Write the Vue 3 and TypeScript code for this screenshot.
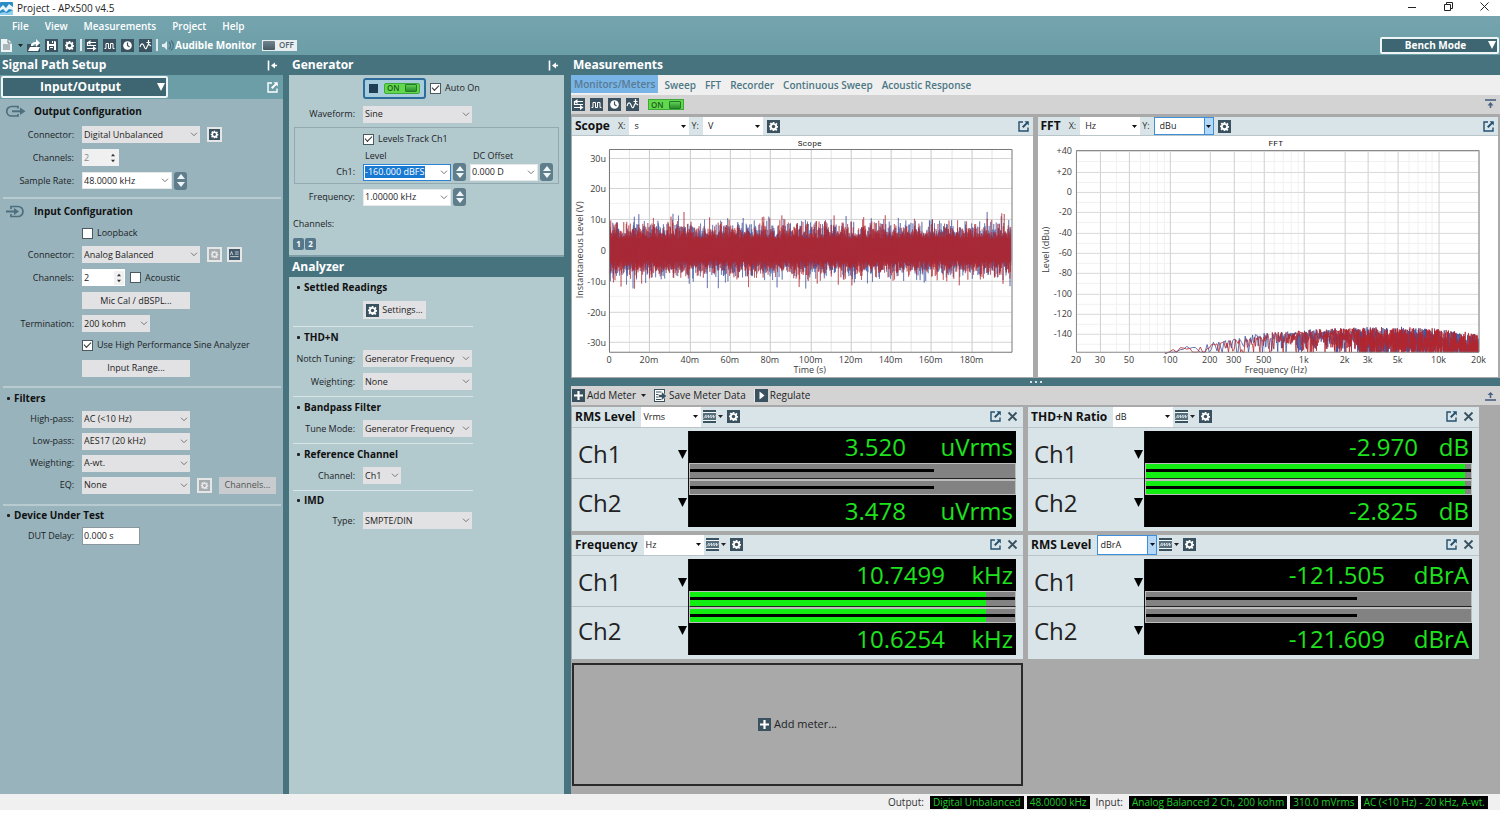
<script setup lang="ts">
import { h } from 'vue'

const INK = '#3a525f'
const box = (inner: string, bg = INK) => `<rect width="13" height="13" fill="${bg}"/>${inner}`
const gearShape = (fg: string, hole: string) =>
  `<path d="M5.6 2h1.8v1.3l1 .4.9-.9 1.3 1.3-.9.9.4 1H11v1.8H9.900l-.4 1 .9.9-1.300 1.300-.9-.9-1 .4V11H5.600V9.900l-1-.4-.9.9-1.300-1.300.9-.9-.4-1H2V5.600h1.100l.4-1-.9-.9 1.300-1.300.9.9 1-.4z" fill="${fg}"/><circle cx="6.500" cy="6.500" r="1.700" fill="${hole}"/>`

const glyphs: Record<string, string> = {
  app: '<rect width="13" height="13" rx="1" fill="#2b8bc4"/><path d="M0 6l3-3 3 3 3-4 4 3v3L9 7 6 10 3 7 0 9z" fill="#e8f6fc"/><path d="M0 11l4-1 3 1 6-3v5H0z" fill="#8fd0ee"/>',
  doc: '<path d="M0 0h7l4 4v9H0z" fill="#eef3f4"/><path d="M7 0v4h4M2 6h7M2 8h7M2 10h7" stroke="#55707b" fill="none" stroke-width=".9"/>',
  open: '<path d="M0 5h4v2h5V5h4v8H0z" fill="#3a525f"/><path d="M1 12l2-4h10l-2 4z" fill="#fff"/><path d="M4 7c0-3 2-4 5-4V0l4 4-4 4V5C7 5 6 6 6 7z" fill="#fff"/>',
  save: box('<path d="M2 2h8l1 1v8H2z" fill="#fff"/><path d="M4 2h5v3H4zM4 7h5v4H4z" fill="#3a525f"/><path d="M7 2h1v2H7zM5 8h3v1H5z" fill="#fff"/>'),
  gear: box(gearShape('#fff', INK)),
  gearOff: box(gearShape('#e6e6e6', '#a4acaf'), '#a4acaf'),
  path: box('<path d="M4 3.500h7M2 9.500h7M2.500 3v3.500H11" stroke="#fff" fill="none" stroke-width="1.200"/><path d="M5.500 1v5L2 3.500zM8 7v5l3.500-2.500z" fill="#fff"/>'),
  wave: box('<path d="M1.500 9.500h1.500v-5h2.500v5h2v-5H10v5h1.500" stroke="#fff" fill="none"/>'),
  clock: box('<circle cx="6.500" cy="6.500" r="4.300" fill="#fff"/><path d="M6.500 3.500v3l2 1.500" stroke="#3a525f" fill="none" stroke-width="1.200"/>'),
  sweep: box('<path d="M1 8c1-4 3-4 4-1s2 4 3 1 2-3 4-1" stroke="#fff" fill="none" stroke-width="1.100"/><path d="M9.500 1v5M7.500 3.500h4" stroke="#fff" stroke-width="1.200"/>'),
  speaker: '<path d="M1 5h2l3-3v9L3 8H1z" fill="#e3eef0"/><path d="M8 3c2 2 2 5 0 7M10 1.500c3 3 3 7 0 10" stroke="#48707c" stroke-width="1.300" fill="none"/>',
  dock: '<path d="M2.500 1.500v10" stroke="#fff" stroke-width="1.600"/><path d="M5 6.500l4-3v6z" fill="#fff"/><path d="M7 6.500h4" stroke="#fff" stroke-width="1.600"/>',
  popout: '<path d="M6 2H2v9h9V7.500" stroke="currentColor" stroke-width="1.400" fill="none"/><path d="M7.500 1.200h4.300v4.300L10.300 4 6.500 8 5 6.500l4-3.800z" fill="currentColor"/>',
  close: '<path d="M2.500 2.500l8 8M10.500 2.500l-8 8" stroke="#3a525f" stroke-width="1.800" fill="none"/>',
  meter: '<rect width="13" height="13" fill="#f3f6f7"/><path d="M0 0h13v2H0zM0 11h13v2H0z" fill="#3a525f"/><path d="M0 3h13v7H0z" fill="#566d7c"/><path d="M.5 8.500L3 5v3l2.500-3v3L8 5v3l2.500-3v3l2-2.500" stroke="#e4ebee" fill="none" stroke-width=".8"/>',
  plus: box('<path d="M6.500 2v9M2 6.500h9" stroke="#fff" stroke-width="2.200"/>'),
  saveData: '<rect x=".5" y=".5" width="10" height="12" fill="#fff" stroke="#3a525f"/><path d="M2 3h6M2 5.500h3M2 8h3M2 10.500h6" stroke="#3a525f"/><path d="M4.500 5.500h3V2.500L12.800 7 7.500 11.500v-3h-3z" fill="#3a525f" stroke="#fff" stroke-width=".6"/>',
  play: box('<path d="M4.500 2.500v8l5-4z" fill="#fff"/>'),
  teds: box('<path d="M1.500 7l1.500-4 1.500 4M7 3.500h4.500M7 6h4.500M1.500 9h10" stroke="#e6ecee" fill="none" stroke-width=".9"/>', '#41586a'),
  up: '<path d="M1 2h11" stroke="#4a6180" stroke-width="1.600"/><path d="M6.500 4l3 3.500h-6z" fill="#4a6180"/><path d="M6.500 6v4" stroke="#4a6180" stroke-width="1.600"/>',
  down: '<path d="M1 11h11" stroke="#4a6180" stroke-width="1.600"/><path d="M6.500 3l3 3h-6z" fill="#4a6180"/><path d="M6.500 5v4" stroke="#4a6180" stroke-width="1.600"/>',
  output: '<path d="M12 3.500V1.500H5.500a4.500 4.500 0 0 0 0 9.500H12V9" stroke="#4d6f7d" stroke-width="1.700" fill="none"/><path d="M6 6.300h9" stroke="#4d6f7d" stroke-width="2"/><path d="M14 2.500l5.500 3.800L14 10z" fill="#4d6f7d"/>',
  input: '<path d="M5 4V1.500h7a5 5 0 0 1 0 10H5V9" stroke="#4d6f7d" stroke-width="1.700" fill="none"/><path d="M0 6.500h9" stroke="#4d6f7d" stroke-width="2"/><path d="M8 3l5 3.500L8 10z" fill="#4d6f7d"/>',
}

const Icon = (p: { name: string; size?: string }) =>
  h('svg', {
    class: 'icon',
    width: p.size === 'wide' ? 20 : 13,
    height: 13,
    viewBox: p.size === 'wide' ? '0 0 20 13' : '0 0 13 13',
    'aria-hidden': 'true',
    innerHTML: glyphs[p.name],
  })

const arrow = (kind?: string) =>
  kind === 'tri'
    ? h('svg', { width: 5, height: 3, viewBox: '0 0 5 3' }, h('path', { d: 'M0 0h5L2.500 3z', fill: '#111' }))
    : kind === 'big'
      ? h('svg', { width: 8, height: 8, viewBox: '0 0 8 8' }, h('path', { d: 'M0 0h8L4 8z', fill: '#fff' }))
      : h('svg', { width: 8, height: 5, viewBox: '0 0 8 5' }, h('path', { d: 'M1 .7l3 3 3-3', fill: 'none', stroke: '#777' }))

const Combo = (p: { id: string; value: string; label?: string; kind?: string }) =>
  h('span', { class: ['combo', p.kind] }, [
    h('select', { id: p.id, 'aria-label': p.label }, h('option', p.value)),
    h('span', { class: 'arrow' }, arrow(p.kind)),
  ])

const EditCombo = (p: { id: string; value: string; label?: string }) =>
  h('span', { class: 'edit' }, [
    h('input', { id: p.id, type: 'text', value: p.value, 'aria-label': p.label }),
    h('button', { type: 'button', 'aria-label': 'Units' }, arrow()),
  ])

const tri = (d: string) => h('svg', { width: 8, height: 5, viewBox: '0 0 8 5' }, h('path', { d, fill: 'currentColor' }))
const Stepper = () =>
  h('span', { class: 'stepper' }, [
    h('button', { type: 'button', 'aria-label': 'Increase' }, tri('M4 0l4 5H0z')),
    h('button', { type: 'button', 'aria-label': 'Decrease' }, tri('M4 5l4-5H0z')),
  ])

const menus = ['File', 'View', 'Measurements', 'Project', 'Help']
const tabs = ['Monitors/Meters', 'Sweep', 'FFT', 'Recorder', 'Continuous Sweep', 'Acoustic Response']
const filters = [
  { id: 'hp', label: 'High-pass:', value: 'AC (<10 Hz)' },
  { id: 'lp', label: 'Low-pass:', value: 'AES17 (20 kHz)' },
  { id: 'fw', label: 'Weighting:', value: 'A-wt.' },
]
const analyzer = [
  { title: 'THD+N', rows: [{ id: 'notch', label: 'Notch Tuning:', value: 'Generator Frequency' }, { id: 'aw', label: 'Weighting:', value: 'None' }] },
  { title: 'Bandpass Filter', rows: [{ id: 'tune', label: 'Tune Mode:', value: 'Generator Frequency' }] },
  { title: 'Reference Channel', rows: [{ id: 'refch', label: 'Channel:', value: 'Ch1' }] },
  { title: 'IMD', rows: [{ id: 'imd', label: 'Type:', value: 'SMPTE/DIN' }] },
]

interface Meter {
  id: string; name: string; unit: string; focus: boolean; unitWidth: number
  fill: number; line: number; readings: { ch: string; value: string; unit: string }[]
}
const meters: Meter[] = [
  { id: 'm1', name: 'RMS Level', unit: 'Vrms', focus: false, unitWidth: 110, fill: 0, line: 75, readings: [{ ch: 'Ch1', value: '3.520', unit: 'uVrms' }, { ch: 'Ch2', value: '3.478', unit: 'uVrms' }] },
  { id: 'm2', name: 'THD+N Ratio', unit: 'dB', focus: false, unitWidth: 54, fill: 98, line: 100, readings: [{ ch: 'Ch1', value: '-2.970', unit: 'dB' }, { ch: 'Ch2', value: '-2.825', unit: 'dB' }] },
  { id: 'm3', name: 'Frequency', unit: 'Hz', focus: false, unitWidth: 71, fill: 91, line: 100, readings: [{ ch: 'Ch1', value: '10.7499', unit: 'kHz' }, { ch: 'Ch2', value: '10.6254', unit: 'kHz' }] },
  { id: 'm4', name: 'RMS Level', unit: 'dBrA', focus: true, unitWidth: 87, fill: 0, line: 65, readings: [{ ch: 'Ch1', value: '-121.505', unit: 'dBrA' }, { ch: 'Ch2', value: '-121.609', unit: 'dBrA' }] },
]

function rng(seed: number) {
  let s = seed
  return () => {
    s = (s * 1664525 + 1013904223) % 4294967296
    return (s + 0.5) / 4294967296
  }
}

// Scope: plot area 37..440 by 13..216, zero line at 114
const scopeX = Array.from({ length: 20 }, (_, i) => 37 + Math.round(i * 20.15))
const scopeY = [-3, -2, -1, 0, 1, 2, 3].map(v => ({ y: 114 - Math.round(v * 30.8), label: v === 0 ? '0' : `${v * 10}u` }))
const scopeXLabels = Array.from({ length: 10 }, (_, i) => ({ x: 37 + Math.round(i * 40.3), label: i ? `${i * 20}m` : '0' }))
function noise(seed: number) {
  const r = rng(seed)
  const n = 1600
  const pts: string[] = []
  for (let i = 0; i <= n; i++) {
    const g = Math.abs(Math.sqrt(-2 * Math.log(r())) * Math.cos(2 * Math.PI * r()))
    const level = Math.min(13.5, 3.5 + g * 2.9) * (i % 2 ? 1 : -1)
    pts.push(`${(37.5 + (i / n) * 402).toFixed(1)},${(114 - level * 3.08).toFixed(1)}`)
  }
  return pts.join(' ')
}
const scopeBlue = noise(7)
const scopeRed = noise(91)

// FFT: plot area 38..441 by 14..216, log frequency axis
const fx = (f: number) => 38 + (Math.log10(f / 20) / 3) * 403
const fy = (db: number) => 56 - db * 1.015
const fftMajor = [20, 30, 50, 100, 200, 300, 500, 1000, 2000, 3000, 5000, 10000, 20000]
const fftMinor = [40, 60, 70, 80, 90, 400, 600, 700, 800, 900, 4000, 6000, 7000, 8000, 9000].map(f => Math.round(fx(f)))
const fftXLabels = fftMajor.map(f => ({ x: Math.round(fx(f)), label: f >= 1000 ? `${f / 1000}k` : `${f}` }))
const fftYLabels = [40, 20, 0, -20, -40, -60, -80, -100, -120, -140].map(v => ({ y: Math.round(fy(v)), label: v > 0 ? `+${v}` : `${v}` }))
const envelope: [number, number][] = [[90, -162], [130, -156], [250, -150], [500, -143], [1000, -140], [3000, -137], [5000, -137], [10000, -138], [20000, -144]]
function envAt(f: number) {
  for (let i = 1; i < envelope.length; i++) {
    const [f1, a1] = envelope[i]
    const [f0, a0] = envelope[i - 1]
    if (f <= f1) return a0 + ((a1 - a0) * Math.log(f / f0)) / Math.log(f1 / f0)
  }
  return -144
}
function spectrum(seed: number) {
  const r = rng(seed)
  const pts: string[] = []
  let f = 92
  let i = 0
  while (f < 20000) {
    const env = envAt(f)
    const dip = f > 2500 && i % 2 ? -14 : 0
    const db = Math.max(-158, env + 14 * Math.log10(-Math.log(r())) - 1 + dip)
    pts.push(`${fx(f).toFixed(1)},${fy(Math.min(db, env + 1 + r() * 3)).toFixed(1)}`)
    f += Math.max(7, f * 0.004)
    i++
  }
  return pts.join(' ')
}
const fftBlue = spectrum(23)
const fftRed = spectrum(58)
</script>

<template>
  <div class="app">
    <header class="titlebar">
      <Icon name="app" />
      <span class="title">Project - APx500 v4.5</span>
      <button type="button" aria-label="Minimize"><svg width="9" height="9" viewBox="0 0 9 9"><path d="M0 5.500h8" stroke="#222" /></svg></button>
      <button type="button" aria-label="Restore"><svg width="9" height="9" viewBox="0 0 9 9"><path d="M.5 2.500h6v6h-6zM2.500 2.500v-2h6v6h-2" stroke="#222" fill="none" /></svg></button>
      <button type="button" aria-label="Close"><svg width="9" height="9" viewBox="0 0 9 9"><path d="M.5.500l8 8M8.500.500l-8 8" stroke="#222" fill="none" /></svg></button>
    </header>

    <div class="top">
      <nav class="menu"><button v-for="m in menus" :key="m" type="button">{{ m }}</button></nav>
      <div class="tools">
        <button type="button" aria-label="New"><Icon name="doc" /></button>
        <svg class="tiny" width="5" height="3" viewBox="0 0 5 3"><path d="M0 0h5L2.500 3z" fill="#222" /></svg>
        <button type="button" aria-label="Open"><Icon name="open" /></button>
        <button type="button" aria-label="Save"><Icon name="save" /></button>
        <button type="button" aria-label="Settings"><Icon name="gear" /></button>
        <i class="sep"></i>
        <button type="button" aria-label="Signal path"><Icon name="path" /></button>
        <button type="button" aria-label="Generator"><Icon name="wave" /></button>
        <button type="button" aria-label="Clock"><Icon name="clock" /></button>
        <button type="button" aria-label="Sweep"><Icon name="sweep" /></button>
        <i class="sep"></i>
        <span class="audible"><Icon name="speaker" />Audible Monitor</span>
        <button type="button" class="toggle off"><i></i>OFF</button>
        <Combo id="mode" class="dark mode" value="Bench Mode" label="Mode" kind="big" />
      </div>
    </div>

    <main class="main">
      <section class="left">
        <div class="bar"><h2>Signal Path Setup</h2><button type="button" aria-label="Collapse"><Icon name="dock" /></button></div>
        <div class="io">
          <Combo id="io" class="dark" value="Input/Output" label="Page" kind="big" />
          <button type="button" aria-label="Pop out"><Icon name="popout" /></button>
        </div>
        <div class="section">
          <h3 class="tall"><Icon name="output" size="wide" />Output Configuration</h3>
          <div class="row"><label for="oc">Connector:</label><Combo id="oc" class="w118" value="Digital Unbalanced" /><button type="button" class="chip" aria-label="Output settings"><Icon name="gear" /></button></div>
          <div class="row"><label for="och">Channels:</label><span class="num disabled"><input id="och" type="text" value="2" disabled><Stepper class="plain" /></span></div>
          <div class="row"><label for="sr">Sample Rate:</label><EditCombo id="sr" class="w90" value="48.0000 kHz" /><Stepper /></div>
        </div>
        <div class="section">
          <h3 class="tall"><Icon name="input" size="wide" />Input Configuration</h3>
          <div class="row short"><label class="check indent"><input type="checkbox">Loopback</label></div>
          <div class="row"><label for="ic">Connector:</label><Combo id="ic" class="w118" value="Analog Balanced" /><button type="button" class="chip" aria-label="Input settings" disabled><Icon name="gearOff" /></button><button type="button" class="chip" aria-label="TEDS"><Icon name="teds" /></button></div>
          <div class="row"><label for="ich">Channels:</label><span class="num"><input id="ich" type="text" value="2"><Stepper class="plain" /></span><label class="check"><input type="checkbox">Acoustic</label></div>
          <div class="row"><button type="button" class="btn indent">Mic Cal / dBSPL...</button></div>
          <div class="row"><label for="term">Termination:</label><Combo id="term" class="w68" value="200 kohm" /></div>
          <div class="row short"><label class="check indent"><input type="checkbox" checked>Use High Performance Sine Analyzer</label></div>
          <div class="row loose"><button type="button" class="btn indent">Input Range...</button></div>
        </div>
        <div class="section filters">
          <h3><i class="dot"></i>Filters</h3>
          <div v-for="f in filters" :key="f.id" class="row"><label :for="f.id">{{ f.label }}</label><Combo :id="f.id" class="w108" :value="f.value" /></div>
          <div class="row"><label for="eq">EQ:</label><Combo id="eq" class="w108" value="None" /><button type="button" class="chip" aria-label="EQ settings" disabled><Icon name="gearOff" /></button><button type="button" class="btn small" disabled>Channels...</button></div>
        </div>
        <div class="section">
          <h3><i class="dot"></i>Device Under Test</h3>
          <div class="row"><label for="dut">DUT Delay:</label><input id="dut" class="field" type="text" value="0.000 s"></div>
        </div>
      </section>

      <section class="middle">
        <div class="bar"><h2>Generator</h2><button type="button" aria-label="Collapse"><Icon name="dock" /></button></div>
        <div class="gen">
          <div class="row r26">
            <button type="button" class="power indent"><i class="stop"></i><span class="toggle on">ON<i></i></span></button>
            <label class="check"><input type="checkbox" checked>Auto On</label>
          </div>
          <div class="row r26"><label for="wf">Waveform:</label><Combo id="wf" class="w110" value="Sine" /></div>
          <div class="levels">
            <div class="row"><label class="check indent"><input type="checkbox" checked>Levels Track Ch1</label></div>
            <div class="captions"><span>Level</span><span>DC Offset</span></div>
            <div class="row"><label for="lv">Ch1:</label><EditCombo id="lv" class="w88 active" value="-160.000 dBFS" /><Stepper /><EditCombo id="dc" class="w68" value="0.000 D" label="DC Offset" /><Stepper /></div>
          </div>
          <div class="row r26"><label for="fq">Frequency:</label><EditCombo id="fq" class="w88" value="1.00000 kHz" /><Stepper /></div>
          <div class="chtext">Channels:</div>
          <div class="chbtns"><button type="button">1</button><button type="button">2</button></div>
        </div>
        <div class="bar"><h2>Analyzer</h2></div>
        <div class="ana">
          <div class="block">
            <h3><i class="dot"></i>Settled Readings</h3>
            <div class="row r26"><button type="button" class="btn settings indent"><Icon name="gear" />Settings...</button></div>
          </div>
          <div v-for="b in analyzer" :key="b.title" class="block">
            <h3><i class="dot"></i>{{ b.title }}</h3>
            <div v-for="r in b.rows" :key="r.id" class="row"><label :for="r.id">{{ r.label }}</label><Combo :id="r.id" :class="r.value === 'Ch1' ? 'w38' : 'w110'" :value="r.value" /></div>
          </div>
        </div>
      </section>

      <section class="right">
        <div class="bar"><h2>Measurements</h2></div>
        <nav class="tabs"><button v-for="(t, i) in tabs" :key="t" type="button" :class="{ current: i === 0 }">{{ t }}</button></nav>
        <div class="strip">
          <button type="button" aria-label="Signal path"><Icon name="path" /></button>
          <button type="button" aria-label="Generator"><Icon name="wave" /></button>
          <button type="button" aria-label="Clock"><Icon name="clock" /></button>
          <button type="button" aria-label="Sweep"><Icon name="sweep" /></button>
          <button type="button" class="toggle on">ON<i></i></button>
          <button type="button" class="end" aria-label="Collapse up"><Icon name="up" /></button>
        </div>

        <div class="charts">
          <article class="chart">
            <div class="head">
              <h4>Scope</h4>
              <label for="sx">X:</label><Combo id="sx" class="unit" value="s" kind="tri" />
              <label for="sy">Y:</label><Combo id="sy" class="unit" value="V" kind="tri" />
              <button type="button" aria-label="Scope settings"><Icon name="gear" /></button>
              <button type="button" class="end" aria-label="Pop out"><Icon name="popout" /></button>
            </div>
            <svg class="plot" viewBox="0 0 461 241">
              <text class="name" x="238" y="10" text-anchor="middle">Scope</text>
              <g stroke="#f1f1f1"><path v-for="k in 6" :key="k" :d="`M37 ${21.500 + Math.round((k - .5) * 30.8)}H440`" /></g>
              <g fill="none"><path v-for="(x, i) in scopeX" :key="x" :d="`M${x + .5} 13V216`" :stroke="i % 2 ? '#e4e4e4' : '#c9c9c9'" /></g>
              <g stroke="#d3d3d3"><path v-for="t in scopeY" :key="t.y" :d="`M37 ${t.y + .5}H440`" /></g>
              <polyline :points="scopeBlue" fill="none" stroke="#3f519c" stroke-width=".5" />
              <polyline :points="scopeRed" fill="none" stroke="#b3262f" stroke-width=".5" />
              <path d="M37.500 13.500H440.500V216.500H37.500z" fill="none" stroke="#777" />
              <text v-for="t in scopeY" :key="t.label" x="34" :y="t.y + 4" text-anchor="end">{{ t.label }}</text>
              <text v-for="t in scopeXLabels" :key="t.label" :x="t.x" y="227" text-anchor="middle">{{ t.label }}</text>
              <text x="238" y="237" text-anchor="middle">Time (s)</text>
              <text transform="translate(11 114) rotate(-90)" text-anchor="middle">Instantaneous Level (V)</text>
            </svg>
          </article>
          <article class="chart">
            <div class="head">
              <h4>FFT</h4>
              <label for="ffx">X:</label><Combo id="ffx" class="unit" value="Hz" kind="tri" />
              <label for="ffy">Y:</label><Combo id="ffy" class="unit focus" value="dBu" kind="tri" />
              <button type="button" aria-label="FFT settings"><Icon name="gear" /></button>
              <button type="button" class="end" aria-label="Pop out"><Icon name="popout" /></button>
            </div>
            <svg class="plot" viewBox="0 0 461 241">
              <text class="name" x="238" y="10" text-anchor="middle">FFT</text>
              <g stroke="#f1f1f1"><path v-for="t in fftYLabels" :key="t.y" :d="`M38 ${t.y + 10.500}H441`" /><path v-for="x in fftMinor" :key="x" :d="`M${x + .5} 14V216`" /></g>
              <g stroke="#cfcfcf"><path v-for="t in fftXLabels" :key="t.x" :d="`M${t.x + .5} 14V216`" /></g>
              <g stroke="#d9d9d9"><path v-for="t in fftYLabels" :key="t.y" :d="`M38 ${t.y + .5}H441`" /></g>
              <polyline :points="fftBlue" fill="none" stroke="#3f519c" stroke-width=".8" />
              <polyline :points="fftRed" fill="none" stroke="#b3262f" stroke-width=".8" />
              <path d="M38.500 14.500H441.500V216.500H38.500z" fill="none" stroke="#888" />
              <text v-for="t in fftYLabels" :key="t.label" x="34" :y="t.y + 3" text-anchor="end">{{ t.label }}</text>
              <text v-for="t in fftXLabels" :key="t.label" :x="t.x" y="227" text-anchor="middle">{{ t.label }}</text>
              <text x="238" y="237" text-anchor="middle">Frequency (Hz)</text>
              <text transform="translate(11 114) rotate(-90)" text-anchor="middle">Level (dBu)</text>
            </svg>
          </article>
        </div>
        <div class="splitter"><i></i><i></i><i></i></div>

        <div class="strip meterbar">
          <button type="button"><Icon name="plus" />Add Meter<svg class="tiny" width="5" height="3" viewBox="0 0 5 3"><path d="M0 0h5L2.500 3z" fill="#222" /></svg></button>
          <button type="button"><Icon name="saveData" />Save Meter Data</button>
          <button type="button" class="divided"><Icon name="play" />Regulate</button>
          <button type="button" class="end" aria-label="Collapse down"><Icon name="down" /></button>
        </div>
        <div class="meters">
          <article v-for="m in meters" :key="m.id" class="meter">
            <div class="head">
              <h4>{{ m.name }}</h4>
              <Combo :id="m.id" class="unit" :class="{ focus: m.focus }" :value="m.unit" :label="m.name + ' unit'" kind="tri" />
              <button type="button" class="menu-icon" aria-label="Meter display"><Icon name="meter" /><svg class="tiny" width="5" height="3" viewBox="0 0 5 3"><path d="M0 0h5L2.500 3z" fill="#222" /></svg></button>
              <button type="button" aria-label="Meter settings"><Icon name="gear" /></button>
              <button type="button" class="end" aria-label="Pop out"><Icon name="popout" /></button>
              <button type="button" aria-label="Remove meter"><Icon name="close" /></button>
            </div>
            <div class="body">
              <div class="names">
                <div v-for="r in m.readings" :key="r.ch" class="ch"><span>{{ r.ch }}</span><button type="button" :aria-label="r.ch + ' menu'"><svg width="9" height="9" viewBox="0 0 9 9"><path d="M0 0h9L4.500 9z" /></svg></button></div>
              </div>
              <div class="display">
                <div v-for="r in m.readings" :key="r.ch" class="reading">
                  <div class="value"><span>{{ r.value }}</span><span class="u" :style="{ width: m.unitWidth + 'px' }">{{ r.unit }}</span></div>
                  <div class="gauge"><i class="fill" :style="{ width: m.fill + '%' }"></i><i class="line" :style="{ width: m.line + '%' }"></i></div>
                </div>
              </div>
            </div>
          </article>
          <button type="button" class="add"><Icon name="plus" />Add meter...</button>
        </div>
      </section>
    </main>

    <footer class="status">
      <span>Output:</span><output>Digital Unbalanced</output><output>48.0000 kHz</output>
      <span>Input:</span><output>Analog Balanced 2 Ch, 200 kohm</output><output>310.0 mVrms</output><output>AC (&lt;10 Hz) - 20 kHz, A-wt.</output>
    </footer>
  </div>
</template>

<style>
body { margin: 0; background: #fff; }
</style>

<style scoped>
.app { display: flex; flex-direction: column; min-height: 100vh; box-sizing: border-box; padding-bottom: 29px; font: 9px/12px "Open Sans", "Noto Sans", sans-serif; color: #1c2326; }
.app :deep(*) { box-sizing: border-box; }
.app :deep(button), .app :deep(select), .app :deep(input) { font: inherit; color: inherit; margin: 0; border: 0; border-radius: 0; }
button, .app :deep(button) { padding: 0; background: none; display: flex; align-items: center; }
h2, h3, h4 { margin: 0; }
.icon { display: block; flex: none; }
.tiny { flex: none; }
.end { margin-left: auto !important; }

.titlebar { display: flex; align-items: center; height: 16px; gap: 4px; background: #fff; font-size: 10px; }
.titlebar .title { flex: 1; color: #222; }
.titlebar button { width: 32px; justify-content: center; height: 12px; align-self: flex-start; }

.top { background: linear-gradient(#75a4ae, #6c9ea8); height: 39px; display: flex; flex-direction: column; color: #fff; font-size: 10px; font-weight: 600; }
.menu { display: flex; gap: 16px; padding-left: 12px; height: 20px; align-items: center; }
.tools { display: flex; align-items: center; gap: 5px; height: 18px; padding: 0 1px; }
.tools .tiny { margin: 0 -1px; }
.sep { width: 2px; height: 12px; background: #dfebee; margin: 0 -2px 0 -1px; }
.audible { display: flex; align-items: center; gap: 1px; margin: 0 1px 0 0; font-weight: 700; }
.mode { margin-left: auto; width: 119px; height: 17px; }

.toggle { display: flex; align-items: center; height: 11px; border-radius: 2px; padding: 0 2px !important; font-size: 8px !important; font-weight: 600 !important; gap: 4px; }
.toggle i { width: 13px; height: 9px; border-radius: 1px; flex: none; }
.toggle.off { background: #e9eef0; color: #53616a !important; width: 35px; padding-left: 1px !important; }
.toggle.off i { background: linear-gradient(#71858f, #465b66); width: 12px; }
.toggle.on { background: #62d94c; color: #1e5d1e !important; border: 1px solid #3fa83a !important; width: 36px; justify-content: space-between; }
.toggle.on i { background: linear-gradient(#5fcf55, #28902a); border: 1px solid #23782a; height: 8px; width: 12px; }

.combo { display: inline-grid; height: 17px; background: #e2e1e3; color: #222; flex: none; }
.combo :deep(select) { grid-area: 1 / 1; appearance: none; width: 100%; background: none; padding: 0 12px 0 2px; outline: 0; height: 100%; min-width: 0; }
.combo :deep(.arrow) { grid-area: 1 / 1; justify-self: end; align-self: stretch; display: flex; align-items: center; justify-content: center; width: 13px; pointer-events: none; }
.combo.dark { background: #3d6572; color: #fff; border: 2px solid #eef5f6; border-radius: 2px; font-weight: 700; }
.combo.dark :deep(select) { text-align: center; text-align-last: center; padding: 0 20px 0 12px; }
.combo.dark :deep(.arrow) { width: 11px; }
.combo.unit { width: 60px; height: 20px; background: #fff; margin-left: 2px; }
.combo.unit :deep(.arrow) { width: 11px; }
.combo.focus { border: 1px solid #3c8fdb; }
.combo.focus :deep(.arrow) { background: #b5d8f7; border-left: 1px solid #3c8fdb; width: 9px; }
.w118 { width: 118px; } .w110 { width: 109px; } .w108 { width: 108px; } .w90 { width: 90px; } .w88 { width: 88px; } .w68 { width: 68px; } .w38 { width: 38px; }

.edit { display: inline-flex; height: 17px; background: #fff; border: 1px solid #e5e9ea; align-items: center; flex: none; }
.edit :deep(input) { flex: 1; min-width: 0; padding: 0 0 0 1px; background: none; outline: 0; height: 12px; }
.edit :deep(button) { width: 13px; justify-content: center; flex: none; }
.edit.active { border-color: #2c83d5; }
.edit.active :deep(input) { background: #1779d2; color: #fff; flex: 0 0 60px; margin-left: 1px; padding: 0; }
.edit.active :deep(button) { margin-left: auto; }

.stepper { display: inline-flex; flex-direction: column; justify-content: space-evenly; align-items: center; width: 13px; height: 18px; background: #5f7d8b; border-radius: 3px; color: #eef6f8; flex: none; }
.stepper.plain { width: 10px; height: 14px; background: #f1f1f1; color: #333; border-radius: 0; }
.stepper.plain :deep(svg) { width: 4px; height: 4px; }

.main { flex: 1; display: grid; grid-template-columns: 283px 275px 1fr; column-gap: 6px; background: #47737f; }
.bar { display: flex; align-items: center; justify-content: space-between; height: 20px; background: #47737f; color: #fff; padding: 0 4px 0 2px; }
.bar h2 { font-size: 12px; line-height: 16px; font-weight: 700; }
.middle .bar { padding-left: 3px; }

.left { background: #98b3bc; }
.io { display: flex; align-items: center; justify-content: space-between; height: 24px; background: #6c9ea8; padding: 0 4px 0 1px; color: #fff; }
.io .dark { width: 167px; height: 22px; font-size: 12px; }
.section { border-bottom: 2px solid #b8cbd1; margin: 0 2px 0 3px; padding-bottom: 5px; }
.section:last-child { border: 0; }
h3 { font-size: 10px; font-weight: 700; color: #111; display: flex; align-items: center; gap: 4px; height: 18px; padding-left: 4px; white-space: nowrap; }
h3.tall { height: 24px; gap: 8px; padding-left: 3px; }
.dot { width: 3px; height: 3px; border-radius: 1px; background: #222; }
.row { display: flex; align-items: center; height: 23px; gap: 2px; white-space: nowrap; }
.row > label:first-child:not(.check) { width: 71px; text-align: right; margin-right: 6px; }
.row.short { height: 20px; }
.row.loose { height: 26px; }
.filters { padding-bottom: 8px; }
.filters h3 { height: 20px; }
.filters .row { height: 22px; }
.indent { margin-left: 79px !important; }
.check { display: inline-flex; align-items: center; gap: 4px; }
.check input { appearance: none; width: 11px; height: 11px; background: #fff; border: 1px solid #4c5a60 !important; display: grid; place-items: center; flex: none; }
.check input:checked::before { content: ""; width: 6px; height: 3px; border: solid #333; border-width: 0 0 1px 1px; transform: rotate(-45deg); margin-bottom: 2px; }
.chip { width: 15px; height: 15px; background: #e6e6e6 !important; justify-content: center; margin-left: 5px !important; }
.chip .icon { width: 11px; height: 11px; }
.chip + .chip { margin-left: 3px !important; }
.num { display: inline-flex; align-items: center; justify-content: space-between; width: 43px; height: 17px; background: #fff; padding: 0 1px 0 2px; margin-right: 3px; }
.num input { width: 20px; background: none; padding: 0; }
.num.disabled { width: 37px; background: #f0f0f0; color: #888; }
.btn { height: 17px; width: 108px; background: #e2e1e3 !important; justify-content: center; }
.btn.small { width: 57px; margin-left: 5px !important; color: #555 !important; background: #c9ccce !important; }
.btn.settings { width: 63px; gap: 3px; height: 18px; }
.field { width: 58px; height: 18px; border: 1px solid #8a979c !important; padding: 0 1px; background: #fff; }

.middle { background: #b2c9ce; display: flex; flex-direction: column; }
.gen { padding: 0 5px 0 4px; border-bottom: 2px solid #7d9ea8; height: 182px; }
.middle .row > label:first-child:not(.check) { width: 62px; }
.middle .indent { margin-left: 70px !important; }
.row.r26 { height: 26px; }
.power { width: 63px; height: 21px; border: 2px solid #2d6d9c !important; border-radius: 3px !important; background: #a8cddc !important; justify-content: space-between; padding: 0 4px !important; margin-right: 4px; }
.power + .check { margin-left: 2px; }
.stop { width: 9px; height: 9px; background: #203f55; }
.levels { border: 1px solid #93a9af; margin: 0 0 0 1px; }
.levels .row { height: 22px; }
.middle .levels .row > label:first-child:not(.check) { width: 60px; }
.middle .levels .indent { margin-left: 68px !important; }
.levels .stepper + .edit { margin-left: 2px; }
.captions { display: flex; height: 11px; align-items: center; padding-left: 70px; }
.captions span { flex: none; width: 108px; }
.captions span:last-child { width: auto; }
.chtext { height: 28px; display: flex; align-items: center; }
.chbtns { display: flex; gap: 1px; }
.chbtns button { width: 11px; height: 12px; background: #55788a; color: #fff; justify-content: center; font-weight: 700; border-radius: 2px; font-size: 8px; }
.ana { padding: 0 5px 0 4px; }
.block { width: 180px; border-bottom: 1px solid #dbe6e8; padding-bottom: 3px; }
.block:last-child { border: 0; }
.block h3 { height: 20px; }
.block:last-child h3 { height: 18px; }

.right { background: #a9a9a9; display: flex; flex-direction: column; min-width: 0; border-left: 1px solid #47737f; }
.tabs { display: flex; height: 20px; background: #efefef; font-size: 10px; font-weight: 600; color: #4d7784; }
.tabs button { padding: 0 5px 0 4px; }
.tabs .current { background: #79b4e6; color: #587a92; padding: 0 3px; margin-right: 2px; height: 18px; }
.strip { display: flex; align-items: center; gap: 5px; height: 19px; background: #d3d3d3; padding: 0 3px 0 1px; font-size: 10px; }
.strip .toggle { margin-left: 4px; }
.strip button { gap: 2px; }
.meterbar { gap: 8px; }
.meterbar .tiny { margin-left: 3px; }
.divided { border-left: 1px solid #ececec !important; padding-left: 4px; }
.charts { display: grid; grid-template-columns: 1fr 1fr; gap: 5px; padding: 3px 2px 1px 1px; }
.chart { background: #fff; min-width: 0; }
.head { display: flex; align-items: center; height: 19px; background: #d8e4e7; padding: 0 3px; gap: 4px; border-bottom: 1px solid #b9c5c8; color: #24506f; }
.head h4 { font-size: 12px; font-weight: 700; color: #111; white-space: nowrap; }
.head label { color: #333; }
.chart h4 { margin-right: 4px; }
.chart .unit + label { margin-left: -2px; }
.chart .unit { margin-left: 0; height: 18px; }
.chart .unit :deep(select) { padding-left: 5px; }
.plot { display: block; width: 100%; height: auto; }
.plot text { font: 9px "Open Sans", "Noto Sans", sans-serif; fill: #3c3c3c; }
.plot text.name { font: 8px "Liberation Mono", monospace; fill: #111; }
.splitter { height: 8px; background: #47737f; display: flex; align-items: center; justify-content: center; gap: 3px; }
.splitter i { width: 2px; height: 2px; background: #d5e3e6; }
.meters { display: grid; grid-template-columns: 1fr 1fr; gap: 4px 5px; padding: 2px 21px 4px 1px; align-content: start; }
.meter { background: #d8e4e7; min-width: 0; }
.meter .head { height: 21px; padding-right: 4px; }
.meter .unit { margin: 0 -2px 0 2px; }
.meter .menu-icon { gap: 2px; }
.body { display: grid; grid-template-columns: 116px 1fr; padding: 3px 7px 4px 0; }
.names { display: grid; grid-template-rows: 1fr 1fr; }
.ch { display: flex; align-items: center; justify-content: space-between; padding: 0 1px 0 6px; font-size: 24px; line-height: 32px; color: #222; }
.ch:first-child { border-bottom: 1px solid #b5c0c3; }
.display { border: 1px solid #111; border-width: 0 0 0 1px; }
.reading { display: flex; flex-direction: column; }
.reading:nth-child(2) { flex-direction: column-reverse; }
.value { background: #000; color: #1fe21f; height: 32px; display: flex; justify-content: flex-end; align-items: center; font-size: 24px; line-height: 32px; }
.value .u { text-align: right; padding-right: 3px; }
.gauge { height: 16px; background: #828282; border: 1px solid #bdbdbd; display: grid; align-items: center; }
.reading:first-child .gauge { border-bottom-color: #222; }
.reading:last-child .gauge { border-top-width: 2px; }
.gauge i { grid-area: 1 / 1; }
.gauge .fill { background: #12ee12; align-self: stretch; }
.gauge .line { background: #000; height: 3px; }
.add { border: 2px solid #2a2a2a !important; height: 123px; margin: 1px 0 0 1px; justify-content: center; gap: 3px; font-size: 11px !important; grid-column: 1; }

.status { display: flex; align-items: center; justify-content: flex-end; height: 16px; background: #f0f0f0; gap: 3px; padding-right: 12px; font-size: 10px; }
.status span { margin: 0 3px; color: #333; }
.status output { background: #000; color: #1fca2a; padding: 0 3px; height: 13px; line-height: 13px; }
</style>
